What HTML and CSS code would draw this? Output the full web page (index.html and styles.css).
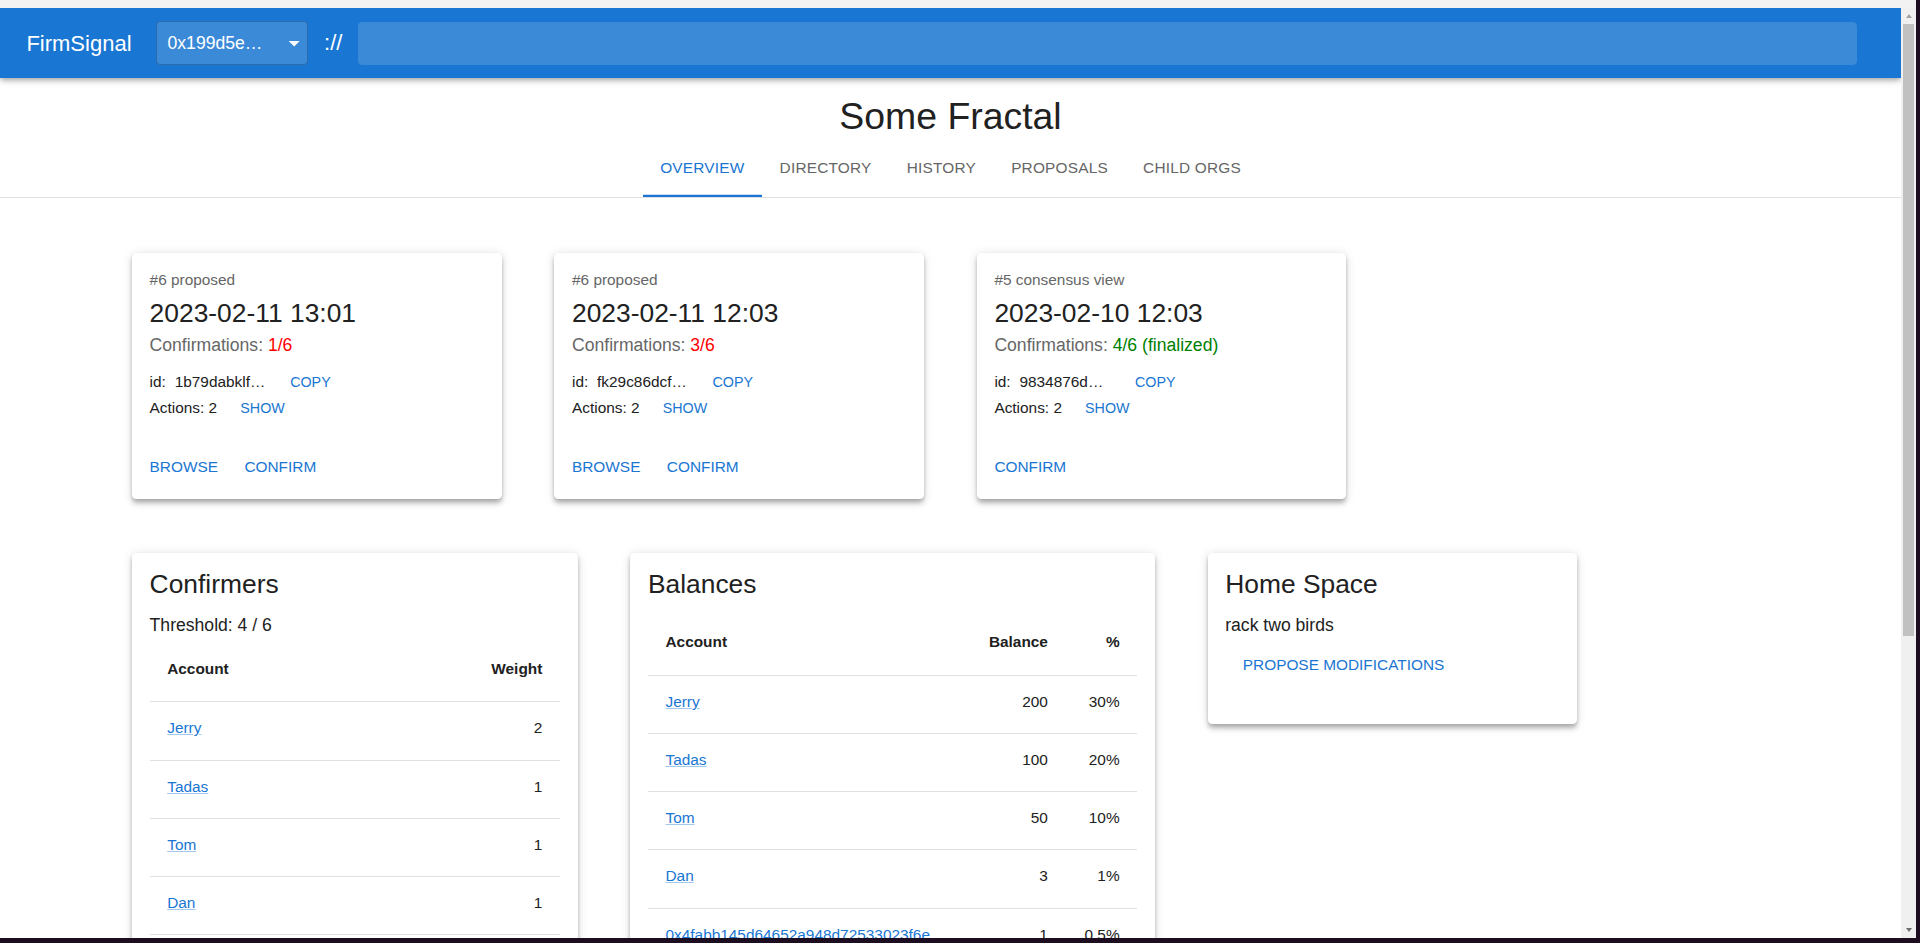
FILE: index.html
```html
<!DOCTYPE html>
<html lang="en">
<head>
<meta charset="utf-8">
<title>FirmSignal – Some Fractal</title>
<link rel="stylesheet" href="styles.css">
</head>
<body>
<div class="screen">
  <div class="window">
    <div class="chrome-strip"></div>
    <div class="frame">
      <div class="page">
        <header class="appbar">
          <div class="brand">FirmSignal</div>
          <div class="select">
            <span class="select-value">0x199d5e…</span>
            <svg class="select-icon" viewBox="0 0 24 24"><path d="M7 10l5 5 5-5z"/></svg>
          </div>
          <div class="sep">://</div>
          <div class="path-input"></div>
        </header>

        <section class="heading">
          <h1 class="title">Some Fractal</h1>
          <nav class="tabs">
            <div class="tab active">Overview</div>
            <div class="tab">Directory</div>
            <div class="tab">History</div>
            <div class="tab">Proposals</div>
            <div class="tab">Child Orgs</div>
          </nav>
        </section>

        <main class="content">
          <div class="row">
            <article class="card proposal">
              <div class="proposal-body">
                <div class="proposal-kind">#6 proposed</div>
                <div class="proposal-date">2023-02-11 13:01</div>
                <div class="proposal-conf">Confirmations: <span class="bad">1/6</span></div>
                <div class="proposal-line first"><span>id:</span><span class="proposal-id">1b79dabklf…</span><span class="btn-small">Copy</span></div>
                <div class="proposal-line"><span>Actions: 2</span><span class="btn-small spaced">Show</span></div>
              </div>
              <div class="card-actions"><span class="btn">Browse</span><span class="btn">Confirm</span></div>
            </article>

            <article class="card proposal">
              <div class="proposal-body">
                <div class="proposal-kind">#6 proposed</div>
                <div class="proposal-date">2023-02-11 12:03</div>
                <div class="proposal-conf">Confirmations: <span class="bad">3/6</span></div>
                <div class="proposal-line first"><span>id:</span><span class="proposal-id">fk29c86dcf…</span><span class="btn-small">Copy</span></div>
                <div class="proposal-line"><span>Actions: 2</span><span class="btn-small spaced">Show</span></div>
              </div>
              <div class="card-actions"><span class="btn">Browse</span><span class="btn">Confirm</span></div>
            </article>

            <article class="card proposal">
              <div class="proposal-body">
                <div class="proposal-kind">#5 consensus view</div>
                <div class="proposal-date">2023-02-10 12:03</div>
                <div class="proposal-conf">Confirmations: <span class="good">4/6 (finalized)</span></div>
                <div class="proposal-line first"><span>id:</span><span class="proposal-id">9834876d…</span><span class="btn-small">Copy</span></div>
                <div class="proposal-line"><span>Actions: 2</span><span class="btn-small spaced">Show</span></div>
              </div>
              <div class="card-actions"><span class="btn">Confirm</span></div>
            </article>
          </div>

          <div class="row">
            <article class="card info confirmers">
              <div class="info-body">
                <h2 class="info-title">Confirmers</h2>
                <p class="info-text">Threshold: 4 / 6</p>
                <table class="data-table">
                  <colgroup><col><col class="col-weight"></colgroup>
                  <thead><tr><th>Account</th><th class="num">Weight</th></tr></thead>
                  <tbody>
                    <tr><td><a class="account" href="#">Jerry</a></td><td class="num">2</td></tr>
                    <tr><td><a class="account" href="#">Tadas</a></td><td class="num">1</td></tr>
                    <tr><td><a class="account" href="#">Tom</a></td><td class="num">1</td></tr>
                    <tr><td><a class="account" href="#">Dan</a></td><td class="num">1</td></tr>
                    <tr><td class="addr"><a class="account" href="#">0x4fabb145d64652a948d72533023f6e7a623c7c53</a></td><td class="num">1</td></tr>
                  </tbody>
                </table>
              </div>
            </article>

            <article class="card info balances">
              <div class="info-body">
                <h2 class="info-title">Balances</h2>
                <table class="data-table">
                  <colgroup><col><col class="col-balance"><col class="col-pct"></colgroup>
                  <thead><tr><th>Account</th><th class="num">Balance</th><th class="num">%</th></tr></thead>
                  <tbody>
                    <tr><td><a class="account" href="#">Jerry</a></td><td class="num">200</td><td class="num">30%</td></tr>
                    <tr><td><a class="account" href="#">Tadas</a></td><td class="num">100</td><td class="num">20%</td></tr>
                    <tr><td><a class="account" href="#">Tom</a></td><td class="num">50</td><td class="num">10%</td></tr>
                    <tr><td><a class="account" href="#">Dan</a></td><td class="num">3</td><td class="num">1%</td></tr>
                    <tr><td class="addr"><a class="account" href="#">0x4fabb145d64652a948d72533023f6e7a623c7c53</a></td><td class="num">1</td><td class="num">0.5%</td></tr>
                  </tbody>
                </table>
              </div>
            </article>

            <article class="card info home">
              <div class="info-body">
                <h2 class="info-title">Home Space</h2>
                <p class="info-text">rack two birds</p>
                <div class="home-actions"><span class="btn">Propose modifications</span></div>
              </div>
            </article>
          </div>
        </main>
      </div>

      <div class="scrollbar">
        <div class="scroll-btn"><span class="arrow-up"></span></div>
        <div class="scroll-thumb"></div>
        <div class="scroll-track"></div>
        <div class="scroll-btn"><span class="arrow-down"></span></div>
      </div>
    </div>
  </div>
</div>
</body>
</html>
```

FILE: styles.css
```css
* { box-sizing: border-box; }

html, body {
  margin: 0;
  padding: 0;
}

body {
  font-family: "Liberation Sans", Arial, sans-serif;
  color: #212121;
  background: #1c0d20;
}

.screen {
  width: 1920px;
  height: 943px;
  background: #1c0d20;
  overflow: hidden;
}

.window {
  width: 1916px;
  height: 938px;
  display: flex;
  flex-direction: column;
  background: #f2f2f2;
}

.chrome-strip {
  height: 8px;
  flex: none;
}

.frame {
  flex: 1;
  display: flex;
  min-height: 0;
}

.page {
  flex: 1;
  min-width: 0;
  background: #fff;
  overflow: hidden;
}

/* ---------- App bar ---------- */
.appbar {
  position: relative;
  z-index: 1;
  height: 70.4px;
  display: flex;
  align-items: center;
  padding: 0 44px 0 26.4px;
  background: #1976d2;
  color: #fff;
  box-shadow: 0 2.2px 4.4px -1.1px rgba(0,0,0,0.2),
              0 4.4px 5.5px 0 rgba(0,0,0,0.14),
              0 1.1px 11px 0 rgba(0,0,0,0.12);
}

.brand {
  font-size: 22px;
  line-height: 1.6;
  margin-right: 24.5px;
}

.select {
  width: 152px;
  height: 44px;
  flex: none;
  display: flex;
  align-items: center;
  justify-content: space-between;
  padding: 0 7.7px 0 10.5px;
  border: 1px solid rgba(0,0,0,0.22);
  border-radius: 4.4px;
  background: rgba(255,255,255,0.15);
  font-size: 17.6px;
}

.select-icon {
  width: 26.4px;
  height: 26.4px;
  fill: #fff;
  margin-right: -7.7px;
}

.sep {
  margin: 0 16px;
  font-size: 22px;
  font-weight: 400;
}

.path-input {
  flex: 1;
  height: 43px;
  border-radius: 4.4px;
  background: rgba(255,255,255,0.15);
}

/* ---------- Heading + tabs ---------- */
.heading {
  text-align: center;
}

.title {
  margin: 0;
  padding-top: 14.6px;
  font-size: 37.4px;
  line-height: 46.2px;
  font-weight: 400;
  color: #212121;
}

.tabs {
  margin-top: 5px;
  display: flex;
  justify-content: center;
  border-bottom: 1px solid #e0e0e0;
}

.tab {
  height: 52.8px;
  min-width: 99px;
  padding: 0 17.6px 5px;
  display: flex;
  align-items: center;
  justify-content: center;
  font-size: 15.4px;
  letter-spacing: 0.2px;
  text-transform: uppercase;
  color: #666;
}

.tab.active {
  color: #1976d2;
  box-shadow: inset 0 -2.2px 0 #1976d2;
}

/* ---------- Content ---------- */
.content {
  padding: 55px 0 0 132px;
}

.row {
  display: flex;
  align-items: flex-start;
  gap: 52.8px;
}

.row + .row {
  margin-top: 54px;
}

.card {
  background: #fff;
  border-radius: 4.4px;
  box-shadow: 0 2.2px 4.4px -1.1px rgba(0,0,0,0.2),
              0 4.4px 5.5px 0 rgba(0,0,0,0.14),
              0 1.1px 11px 0 rgba(0,0,0,0.12);
}

/* proposal cards */
.proposal {
  width: 369.6px;
}

.proposal-body {
  padding: 17.6px 17.6px 0;
}

.proposal-kind {
  font-size: 15.4px;
  line-height: 18px;
  color: #666;
}

.proposal-date {
  margin-top: 7.6px;
  font-size: 26.4px;
  line-height: 35.2px;
  color: #212121;
}

.proposal-conf {
  margin-top: 1px;
  font-size: 17.6px;
  line-height: 26.4px;
  color: #666;
}

.bad { color: #ff0000; }
.good { color: #008000; }

.proposal-line {
  display: flex;
  align-items: center;
  height: 26px;
  font-size: 15.4px;
  line-height: 26px;
  color: #212121;
  white-space: nowrap;
}

.proposal-line.first {
  margin-top: 10.3px;
}

.proposal-id {
  display: inline-block;
  width: 110px;
  margin-left: 8.8px;
  overflow: hidden;
}

.btn-small {
  padding: 0 5.5px;
  font-size: 14.3px;
  color: #1976d2;
  text-transform: uppercase;
}

.btn-small.spaced {
  margin-left: 17.6px;
}

.card-actions {
  display: flex;
  gap: 8.8px;
  padding: 26.4px 8.8px 11px;
}

.btn {
  display: inline-block;
  min-width: 70.4px;
  padding: 6.6px 8.8px;
  font-size: 15.4px;
  line-height: 26.95px;
  color: #1976d2;
  text-transform: uppercase;
  text-align: center;
  white-space: nowrap;
}

/* info cards */
.confirmers { width: 445.5px; }
.balances { width: 524.5px; }
.home { width: 369.6px; }

.info-body {
  padding: 17.6px 17.6px 0;
}

.info-title {
  margin: -3px 0 0;
  font-size: 26.4px;
  line-height: 35.2px;
  font-weight: 400;
  color: #212121;
}

.info-text {
  margin: 9.9px 0 0;
  font-size: 17.6px;
  line-height: 26.4px;
  color: #212121;
}

.home .info-body {
  padding-bottom: 38.2px;
}

.home-actions {
  margin-top: 6.5px;
  padding-left: 8.8px;
}

.data-table {
  width: 100%;
  border-collapse: collapse;
  table-layout: fixed;
}

.confirmers .data-table { margin-top: 5.6px; }
.balances .data-table { margin-top: 15.3px; }

.col-weight { width: 120px; }
.col-balance { width: 113px; }
.col-pct { width: 71.7px; }

.data-table th,
.data-table td {
  padding: 15px 17.6px 20.2px;
  font-size: 15.4px;
  line-height: 22px;
  text-align: left;
  vertical-align: top;
  border-bottom: 1px solid #e0e0e0;
  color: #212121;
}

.data-table th {
  padding-top: 13.6px;
  padding-bottom: 21.6px;
  font-weight: 700;
}

.data-table .num {
  text-align: right;
}

.data-table .addr {
  word-break: break-all;
}

.account {
  color: #1976d2;
  text-decoration: underline;
  text-decoration-color: rgba(25,118,210,0.4);
}

/* ---------- Scrollbar ---------- */
.scrollbar {
  width: 15px;
  flex: none;
  display: flex;
  flex-direction: column;
  align-items: center;
  background: #f0f0f0;
}

.scroll-btn {
  height: 16px;
  width: 100%;
  display: flex;
  align-items: center;
  justify-content: center;
}

.arrow-up {
  width: 0;
  height: 0;
  border-left: 3.5px solid transparent;
  border-right: 3.5px solid transparent;
  border-bottom: 4px solid #a3a3a3;
}

.arrow-down {
  width: 0;
  height: 0;
  border-left: 3.5px solid transparent;
  border-right: 3.5px solid transparent;
  border-top: 4px solid #6e6e6e;
}

.scroll-thumb {
  width: 11px;
  height: 612px;
  background: #c1c1c1;
}

.scroll-track {
  flex: 1;
}
```
